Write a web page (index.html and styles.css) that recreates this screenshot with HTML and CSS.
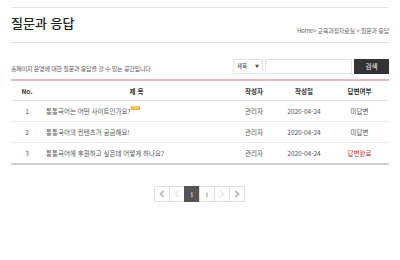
FILE: index.html
```html
<!DOCTYPE html>
<html lang="ko">
<head>
  <meta charset="UTF-8">
  <title>질문과 응답</title>
  <link rel="stylesheet" href="styles.css">
</head>
<body>
  <div class="wrap">
    <div class="head">
      <h1>질문과 응답</h1>
      <p class="crumb">Home&gt; 교육과정자료실 &gt; 질문과 응답</p>
    </div>

    <div class="bar">
      <p class="desc">홈페이지 운영에 대한 질문과 응답을 할 수 있는 공간입니다.</p>
      <div class="search">
        <div class="sel">제목 <span class="arr">▼</span></div>
        <div class="inp"></div>
        <button class="btn">검색</button>
      </div>
    </div>

    <table class="list">
      <thead>
        <tr>
          <th class="c-no">No.</th>
          <th class="c-tit">제 목</th>
          <th class="c-wr">작성자</th>
          <th class="c-dt">작성일</th>
          <th class="c-st">답변여부</th>
        </tr>
      </thead>
      <tbody>
        <tr>
          <td class="c-no">1</td>
          <td class="c-tit left">통통국어는 어떤 사이트인가요?<span class="new">NEW</span></td>
          <td>관리자</td>
          <td>2020-04-24</td>
          <td>미답변</td>
        </tr>
        <tr>
          <td class="c-no">2</td>
          <td class="c-tit left">통통국어의 컨텐츠가 궁금해요!</td>
          <td>관리자</td>
          <td>2020-04-24</td>
          <td>미답변</td>
        </tr>
        <tr>
          <td class="c-no">3</td>
          <td class="c-tit left">통통국어에 후원하고 싶은데 어떻게 하나요?</td>
          <td>관리자</td>
          <td>2020-04-24</td>
          <td class="done">답변완료</td>
        </tr>
      </tbody>
    </table>

    <div class="paging">
      <a class="pg"><svg width="8" height="8" viewBox="0 0 8 8"><path d="M5.5 1 L2.5 4 L5.5 7" fill="none" stroke="#bdbdbd" stroke-width="1.8"/></svg></a>
      <a class="pg"><svg width="8" height="8" viewBox="0 0 8 8"><path d="M5.5 1 L2.5 4 L5.5 7" fill="none" stroke="#c4c4c4" stroke-width="0.8"/></svg></a>
      <a class="pg on">1</a>
      <a class="pg">1</a>
      <a class="pg"><svg width="8" height="8" viewBox="0 0 8 8"><path d="M2.5 1 L5.5 4 L2.5 7" fill="none" stroke="#c4c4c4" stroke-width="0.8"/></svg></a>
      <a class="pg"><svg width="8" height="8" viewBox="0 0 8 8"><path d="M2.5 1 L5.5 4 L2.5 7" fill="none" stroke="#bdbdbd" stroke-width="1.8"/></svg></a>
    </div>
  </div>
</body>
</html>
```

FILE: styles.css
```css
body {
  margin: 0;
  background: #ffffff;
  color: #333333;
  font-family: "Noto Sans CJK KR", "Noto Sans", sans-serif;
}

.wrap { width: 378px; margin: 0 auto; padding-top: 7px; }

.head {
  display: flex;
  justify-content: space-between;
  align-items: flex-end;
  border-top: 1px solid #e6e6e6;
  border-bottom: 1px solid #dcdcdc;
  height: 34px;
}
.head h1 {
  margin: 0 0 11px 0;
  font-size: 13px;
  font-weight: 500;
  color: #222222;
  line-height: 16px;
}
.crumb {
  margin: 0 0 7px 0;
  font-size: 6px;
  color: #666666;
  letter-spacing: -0.2px;
}

.bar {
  display: flex;
  justify-content: space-between;
  align-items: center;
  margin-top: 15px;
  height: 16px;
}
.desc { margin: 4px 0 0 0; font-size: 6px; color: #555555; letter-spacing: -0.2px; }

.search { display: flex; gap: 2px; height: 15px; }
.sel {
  width: 30px;
  border: 1px solid #e2e2e2;
  box-sizing: border-box;
  display: flex;
  justify-content: space-between;
  padding: 0 3px;
  font-size: 5.5px;
  color: #444444;
  line-height: 13px;
}
.arr { font-size: 4px; }
.inp { width: 87px; border: 1px solid #e2e2e2; box-sizing: border-box; }
.btn {
  width: 35px;
  border: 0;
  background: #333333;
  color: #ffffff;
  font-family: inherit;
  font-size: 6.5px;
  padding: 0;
}

.list {
  width: 100%;
  margin-top: 5px;
  border-collapse: collapse;
  border-top: 2px solid #eab9bd;
  border-bottom: 2px solid #cfcfcf;
  font-size: 6.5px;
}
.list th {
  height: 19px;
  padding: 0;
  font-weight: 700;
  color: #333333;
  border-bottom: 1px solid #e6e6e6;
}
.list td {
  height: 20px;
  padding: 0;
  text-align: center;
  color: #555555;
  border-bottom: 1px solid #e8e8e8;
}
.list tr:last-child td { border-bottom: 0; }
.c-no { width: 32px; }
.c-wr { width: 48px; }
.c-dt { width: 52px; }
.c-st { width: 59px; }
.list td.left { text-align: left; padding-left: 3px; }
.list td.done { color: #d32f2f; }

.new {
  display: inline-block;
  vertical-align: top;
  margin-left: 1px;
  background: #f5a623;
  color: #ffffff;
  font-size: 3px;
  line-height: 4px;
  padding: 0 1px;
  border-radius: 1px;
}

.paging { display: flex; justify-content: center; margin-top: 21px; }
.pg {
  width: 14px;
  height: 14px;
  border: 1px solid #e0e0e0;
  margin-left: -1px;
  display: flex;
  align-items: center;
  justify-content: center;
  font-size: 6px;
  color: #777777;
  font-family: "DejaVu Serif", serif;
}
.pg.on { background: #555555; border-color: #555555; color: #ffffff; }
```
